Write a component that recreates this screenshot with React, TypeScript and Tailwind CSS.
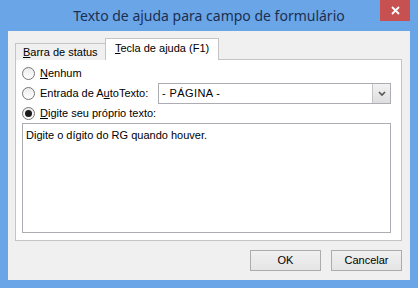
import React from "react";

const UI = { fontFamily: '"Liberation Sans", Arial, sans-serif' };
const TITLE = { fontFamily: '"Noto Sans", "Open Sans", sans-serif' };

function Radio({ checked }: { checked?: boolean }) {
  return (
    <div className="w-[13px] h-[13px] rounded-full border border-[#747474] bg-gradient-to-b from-[#ececec] to-white flex items-center justify-center shrink-0">
      {checked && <div className="w-[7px] h-[7px] rounded-full bg-[#1a1a1a]" />}
    </div>
  );
}

export default function App() {
  return (
    <div className="w-[418px] h-[288px] bg-[#6aa5e8] flex flex-col text-[11px] text-black" style={UI}>
      <div className="h-[31px] relative flex items-center justify-center shrink-0">
        <span className="text-[14px] text-[#1b3050] -mt-[1px]" style={TITLE}>
          Texto de ajuda para campo de formulário
        </span>
        <div className="absolute right-[8px] top-0 w-[30px] h-[21px] bg-[#c75050] flex items-center justify-center">
          <svg width="9" height="9" viewBox="0 0 9 9">
            <path d="M1 1 L8 8 M8 1 L1 8" stroke="white" strokeWidth="1.8" />
          </svg>
        </div>
      </div>
      <div className="flex-1 mx-[8px] mb-[8px] bg-[#f0f0f0] flex flex-col pt-[8px] pl-[7px] pr-[8px]">
        <div className="flex items-end h-[21px] relative z-10 -mb-px">
          <div className="w-[91px] h-[17px] border border-b-0 border-[#c4c4c4] bg-[#f0f0f0] flex items-center pl-[7px] leading-none">
            <span><span className="underline">B</span>arra de status</span>
          </div>
          <div className="-ml-px w-[114px] h-[22px] border border-b-0 border-[#c4c4c4] bg-white flex items-center pl-[9px] leading-none pb-[2px]">
            <span><span className="underline">T</span>ecla de ajuda (F1)</span>
          </div>
        </div>
        <div className="h-[182px] bg-white border border-[#c4c4c4] pl-[6px] pr-[10px] pt-[4px] flex flex-col">
          <div className="h-[19px] flex items-center gap-[5px]">
            <Radio />
            <span><span className="underline">N</span>enhum</span>
          </div>
          <div className="h-[21px] flex items-center gap-[5px]">
            <Radio />
            <span>Entrada de A<span className="underline">u</span>toTexto:</span>
            <div className="ml-auto w-[233px] h-[21px] border border-[#abadb3] bg-white flex items-center">
              <span className="pl-[3px] flex-1 tracking-[0.4px]">- PÁGINA -</span>
              <div className="w-[18px] h-[19px] border-l border-[#c4c4c4] bg-gradient-to-b from-[#f2f2f2] to-[#dedede] flex items-center justify-center">
                <svg width="8" height="6" viewBox="0 0 8 6">
                  <path d="M1 1 L4 4 L7 1" stroke="#555" strokeWidth="1.6" fill="none" />
                </svg>
              </div>
            </div>
          </div>
          <div className="h-[18px] flex items-center gap-[5px]">
            <Radio checked />
            <span><span className="underline">D</span>igite seu próprio texto:</span>
          </div>
          <div className="mt-[1px] h-[110px] border border-[#abadb3] bg-white px-[3px] pt-[5px] leading-[13px]">
            Digite o dígito do RG quando houver.
          </div>
        </div>
        <div className="flex justify-end gap-[10px] mt-[9px]">
          <div className="w-[71px] h-[21px] border border-[#acacac] bg-gradient-to-b from-[#f0f0f0] to-[#e5e5e5] flex items-center justify-center">
            OK
          </div>
          <div className="w-[71px] h-[21px] border border-[#acacac] bg-gradient-to-b from-[#f0f0f0] to-[#e5e5e5] flex items-center justify-center">
            Cancelar
          </div>
        </div>
      </div>
    </div>
  );
}
